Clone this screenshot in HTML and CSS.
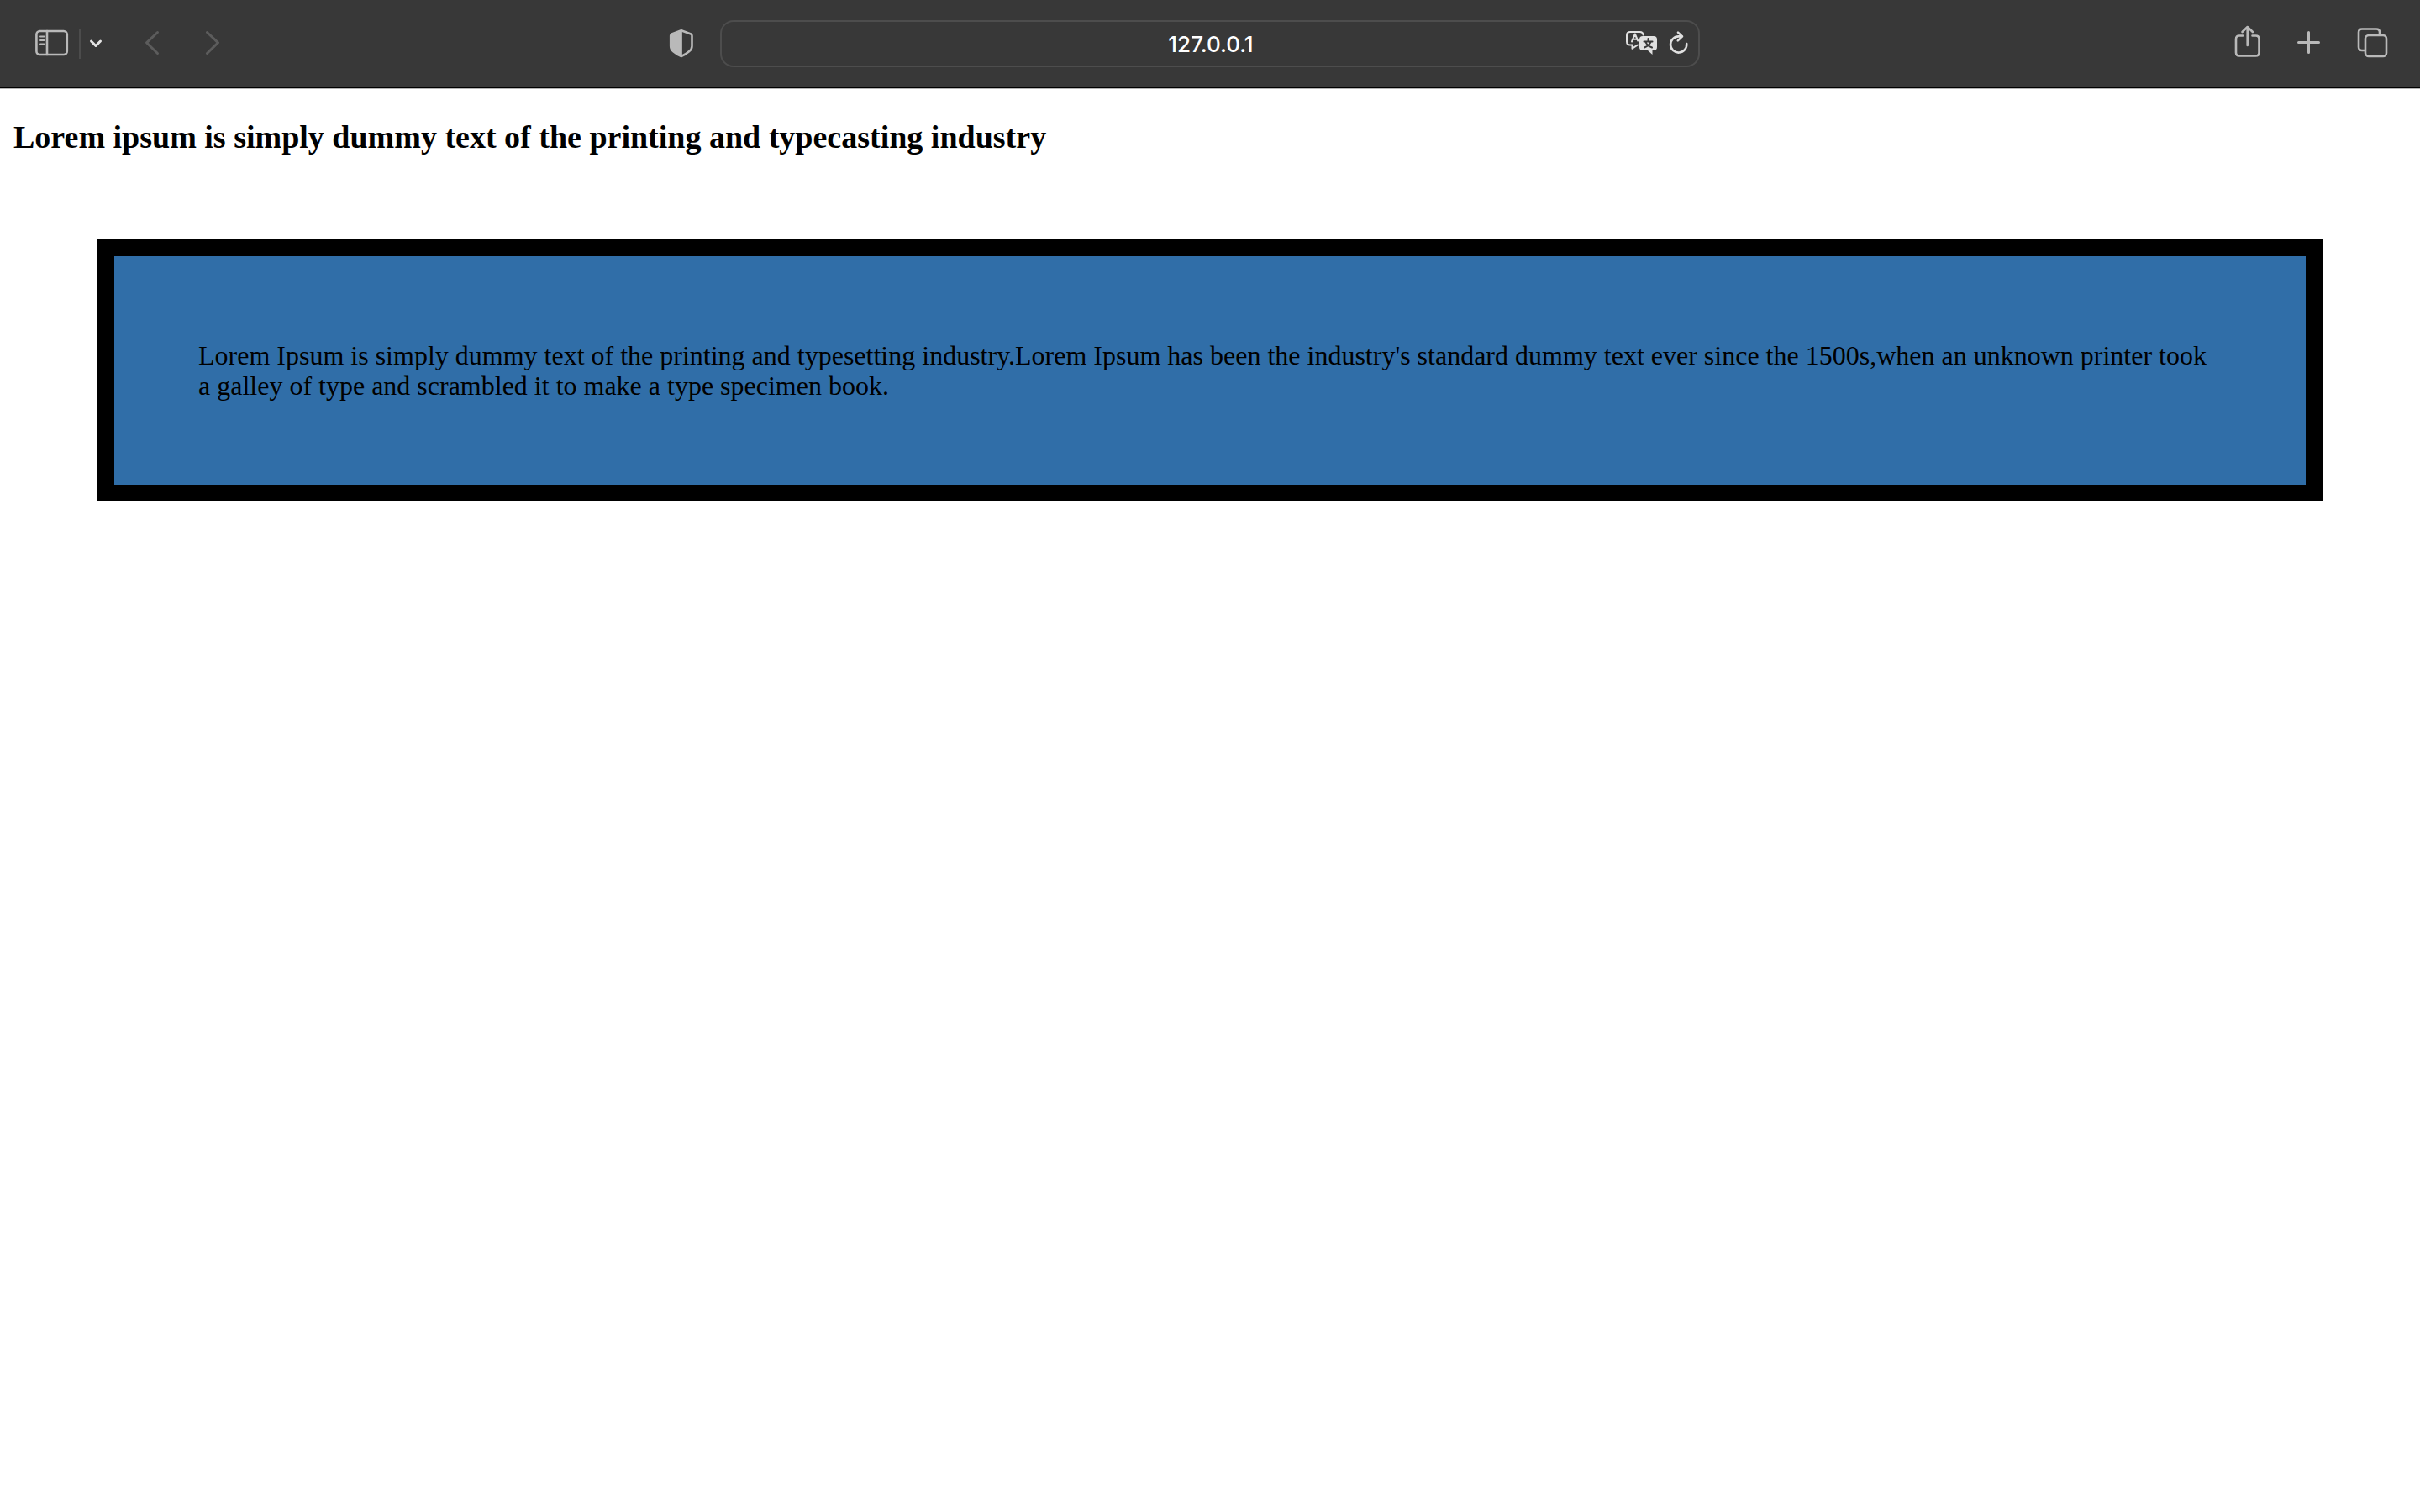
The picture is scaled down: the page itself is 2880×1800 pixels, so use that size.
FILE: index.html
```html
<!DOCTYPE html>
<html lang="en">
<head>
<meta charset="utf-8">
<title>127.0.0.1</title>
<link rel="stylesheet" href="styles.css">
</head>
<body>
<header class="toolbar">
  <div class="side side-left">
    <button class="tool sidebar-button" aria-label="Show sidebar">
      <svg width="40" height="36" viewBox="0 0 40 36"><rect x="1.4" y="3" width="36.4" height="28" rx="4"/><path d="M14 3v28"/><path class="thin" d="M6 9.500h4.500M6 14h4.500M6 18.500h4.500"/></svg>
    </button>
    <span class="divider"></span>
    <button class="tool menu-button" aria-label="Tab groups">
      <svg width="14" height="36" viewBox="0 0 14 36"><path class="bold" d="M1.500 15l5.500 5.500 5.500-5.500"/></svg>
    </button>
    <button class="tool history-button" aria-label="Back" disabled>
      <svg width="16" height="36" viewBox="0 0 16 36"><path class="bold" d="M14.500 4.500L1.500 16.800l13 12.700"/></svg>
    </button>
    <button class="tool history-button" aria-label="Forward" disabled>
      <svg width="16" height="36" viewBox="0 0 16 36"><path class="bold" d="M1.500 4.500l13 12.300-13 12.700"/></svg>
    </button>
    <button class="tool shield-button" aria-label="Privacy report">
      <svg width="28" height="36" viewBox="0 0 28 36"><path d="M13.800 2.300L2.500 6.500Q1.200 7.100 1.200 8.500V21q0 3.600 3.200 6.200 4.200 3.600 9.400 5.800 5-2.200 9.200-5.800 3.500-2.600 3.500-6.200V8.500q0-1.400-1.300-2z"/><path class="solid" d="M14 2.300L2.500 6.500 1.200 8.500V21q0 3.600 3.200 6.200Q8.500 30.700 14 33z"/></svg>
    </button>
  </div>
  <div class="address">
    <input class="address-input" type="text" value="127.0.0.1" aria-label="Address">
    <button class="tool bright" aria-label="Translate page">
      <svg width="38" height="36" viewBox="0 0 38 36"><path class="thin" d="M14 19.500l-6.500 4.200v-4.200H5q-4 0-4-4V8q0-4 4-4h11.500q4 0 4 3.500"/><path class="thin" d="M7 15.500l3.800-9 3.400 8M8.500 12.700h4.500"/><path class="solid bare" d="M20 9h13q4 0 4 4v9q0 4-4 4h-1.500v5L26 26h-6q-4 0-4-4v-9q0-4 4-4z"/><path class="cut" d="M26.500 12v3M21.500 15.500h10M29.500 16q-1.500 4-7.500 6.500M23.500 16q1.500 4 7.500 6.500"/></svg>
    </button>
    <button class="tool bright" aria-label="Reload page">
      <svg width="22" height="36" viewBox="0 0 22 36"><path d="M20.200 18A9.600 9.600 0 1 1 10.600 9.400h4.400M10 4.600l5 4.800-5.200 5"/></svg>
    </button>
  </div>
  <div class="side side-right">
    <button class="tool" aria-label="Share">
      <svg width="30" height="36" viewBox="0 0 30 36"><path d="M9 8.500H5q-4 0-4 4V28.500q0 4 4 4h19.500q4 0 4-4v-16q0-4-4-4h-4M14.700 20V-1.500M8.500 4l6.200-6 6.200 6"/></svg>
    </button>
    <button class="tool" aria-label="New tab">
      <svg width="28" height="36" viewBox="0 0 28 36"><path class="bold" d="M1.500 16.500h24M13.500 4.500v24"/></svg>
    </button>
    <button class="tool" aria-label="Tab overview">
      <svg width="36" height="36" viewBox="0 0 36 36"><path d="M8 26H5q-4 0-4-4V4.500q0-4 4-4h17q4 0 4 4V7"/><rect x="9" y="8" width="25" height="25" rx="4"/></svg>
    </button>
  </div>
</header>
<main class="page">
  <h3 class="title">Lorem ipsum is simply dummy text of the printing and typecasting industry</h3>
  <p class="box">Lorem Ipsum is simply dummy text of the printing and typesetting industry.Lorem Ipsum has been the industry's standard dummy text ever since the 1500s,when an unknown printer took a galley of type and scrambled it to make a type specimen book.</p>
</main>
</body>
</html>
```
FILE: styles.css
```css
* {
  box-sizing: border-box;
}

body {
  margin: 0;
  background: #fff;
  color: #000;
  font-family: "Liberation Serif", "Times New Roman", serif;
  font-size: 32px;
  line-height: 36px;
}

/* Browser toolbar */
.toolbar {
  display: grid;
  grid-template-columns: 1fr minmax(0, 1166px) 1fr;
  align-items: center;
  padding: 24px 38px;
  background: #383838;
  border-bottom: 1px solid #000;
  box-shadow: 0 1px 0 #b4b4b4;
}

.side {
  display: flex;
  align-items: center;
}

.side-right {
  justify-content: flex-end;
  gap: 44px;
}

.tool {
  display: block;
  flex: none;
  margin: 0;
  padding: 0;
  border: 0;
  background: none;
  color: #b9b9b9;
}

.tool svg {
  display: block;
  overflow: visible;
  fill: none;
  stroke: currentColor;
  stroke-width: 2.6;
  stroke-linecap: round;
  stroke-linejoin: round;
}

.tool svg .thin {
  stroke-width: 2;
}

.tool svg .bold {
  stroke-width: 3;
}

.tool svg .solid {
  fill: currentColor;
  stroke-width: 1;
}

.tool svg .bare {
  stroke: none;
}

.tool svg .cut {
  stroke: #383838;
  stroke-width: 2;
}

.sidebar-button {
  margin-left: 4px;
}

.divider {
  width: 2px;
  height: 36px;
  margin: 0 11px 0 12px;
  background: #4c4c4c;
}

.menu-button {
  margin-right: 52px;
  color: #e4e4e4;
}

.history-button {
  margin-right: 56px;
  color: #5c5c5c;
}

.shield-button {
  margin-left: auto;
  margin-right: 32px;
}

.bright {
  color: #e0e0e0;
}

.address {
  display: flex;
  align-items: center;
  gap: 14px;
  height: 56px;
  padding: 0 12px 0 102px;
  border: 2px solid #4d4d4d;
  border-radius: 16px;
}

.address-input {
  flex: 1;
  min-width: 0;
  padding: 2px 0 0;
  border: 0;
  outline: 0;
  background: none;
  color: #fff;
  font: 500 26px/36px Inter, sans-serif;
  text-align: center;
}

/* Page content */
.page {
  padding: 0 16px;
}

.title {
  margin: 36px 0 100px;
  font-size: 38px;
  line-height: 44px;
}

.box {
  margin: 0 100px;
  padding: 100px;
  border: 20px solid #000;
  background: #306ea8;
}
```
